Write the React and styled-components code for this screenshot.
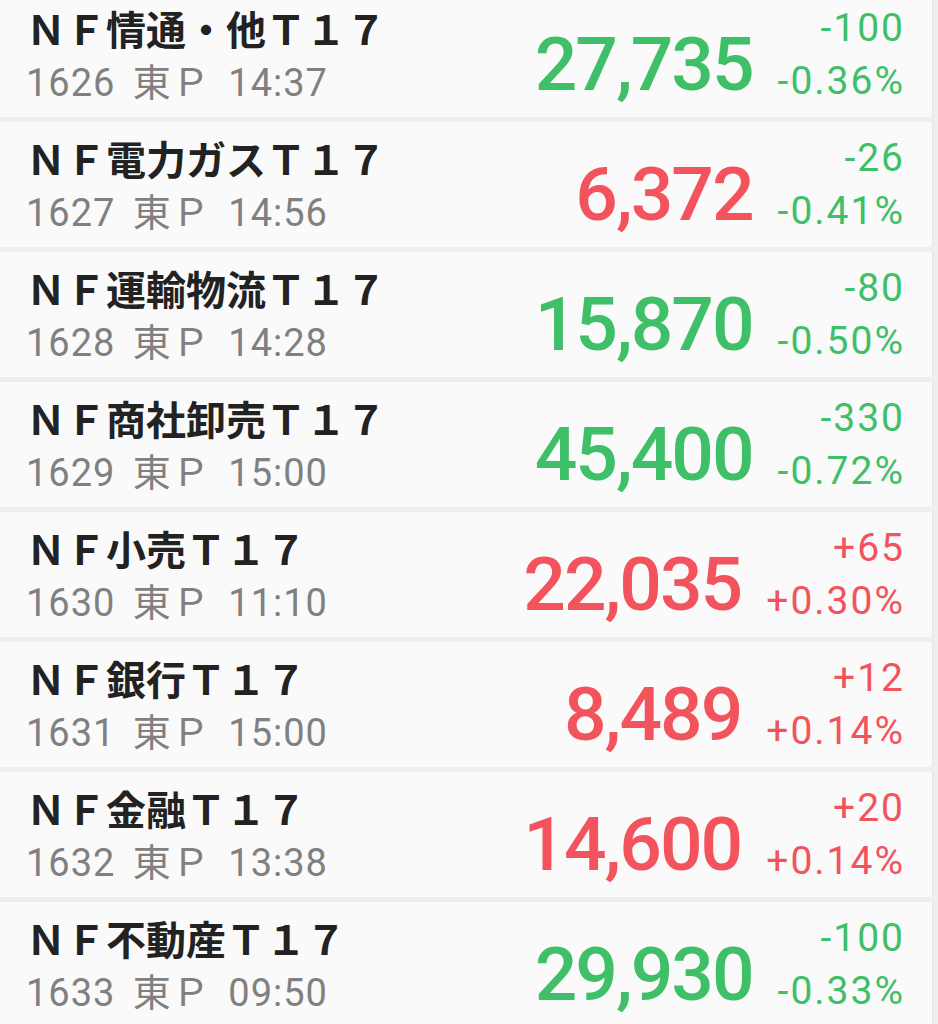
import React from 'react'
import styled, { createGlobalStyle } from 'styled-components'

const GlobalStyle = createGlobalStyle`
  html, body {
    margin: 0;
    padding: 0;
    background: #eeeeee;
    overflow: hidden;
  }
`

const List = styled.div`
  margin-top: -8px;
  margin-right: 5px;
  display: flex;
  flex-direction: column;
  gap: 5px;
`

const Row = styled.div`
  height: 125px;
  box-sizing: border-box;
  background: #fafafa;
  border-right: 1px solid #e4e4e4;
  display: flex;
  align-items: flex-start;
  justify-content: space-between;
  padding: 0 27px 0 26px;
`

const Info = styled.div`
  margin-top: 14px;
  display: flex;
  flex-direction: column;
`

const Title = styled.div`
  font-family: "Noto Sans CJK JP", sans-serif;
  font-weight: 700;
  font-size: 40px;
  line-height: 44px;
  color: #222222;
`

const Sub = styled.div`
  margin-top: 11px;
  font-family: Roboto, "Noto Sans CJK JP", sans-serif;
  font-size: 38px;
  line-height: 44px;
  letter-spacing: 1px;
  word-spacing: 7px;
  color: #808080;
`

const Quote = styled.div`
  margin-top: 10px;
  display: flex;
  align-items: flex-start;
  gap: 25px;
`

const Price = styled.div`
  margin-top: 25px;
  font-family: Roboto, sans-serif;
  font-weight: 500;
  font-size: 75px;
  line-height: 75px;
  letter-spacing: -2px;
  color: ${p => (p.$up ? '#f2535c' : '#3fbf68')};
`

const Change = styled.div`
  display: flex;
  flex-direction: column;
  align-items: flex-end;
  font-family: Roboto, sans-serif;
  font-size: 39px;
  line-height: 53px;
  letter-spacing: 2px;
  color: ${p => (p.$up ? '#f2535c' : '#3fbf68')};
`

const rows = [
  ['ＮＦ情通・他Ｔ１７', '1626', '14:37', '27,735', false, '-100', '-0.36%', false],
  ['ＮＦ電力ガスＴ１７', '1627', '14:56', '6,372', true, '-26', '-0.41%', false],
  ['ＮＦ運輸物流Ｔ１７', '1628', '14:28', '15,870', false, '-80', '-0.50%', false],
  ['ＮＦ商社卸売Ｔ１７', '1629', '15:00', '45,400', false, '-330', '-0.72%', false],
  ['ＮＦ小売Ｔ１７', '1630', '11:10', '22,035', true, '+65', '+0.30%', true],
  ['ＮＦ銀行Ｔ１７', '1631', '15:00', '8,489', true, '+12', '+0.14%', true],
  ['ＮＦ金融Ｔ１７', '1632', '13:38', '14,600', true, '+20', '+0.14%', true],
  ['ＮＦ不動産Ｔ１７', '1633', '09:50', '29,930', false, '-100', '-0.33%', false],
]

const App = () => {
  return (
    <>
      <GlobalStyle />
      <List>
        {rows.map(([name, code, time, price, priceUp, diff, pct, changeUp]) => (
          <Row key={code}>
            <Info>
              <Title>{name}</Title>
              <Sub>{code} 東Ｐ {time}</Sub>
            </Info>
            <Quote>
              <Price $up={priceUp}>{price}</Price>
              <Change $up={changeUp}>
                <span>{diff}</span>
                <span>{pct}</span>
              </Change>
            </Quote>
          </Row>
        ))}
      </List>
    </>
  )
}

export default App
